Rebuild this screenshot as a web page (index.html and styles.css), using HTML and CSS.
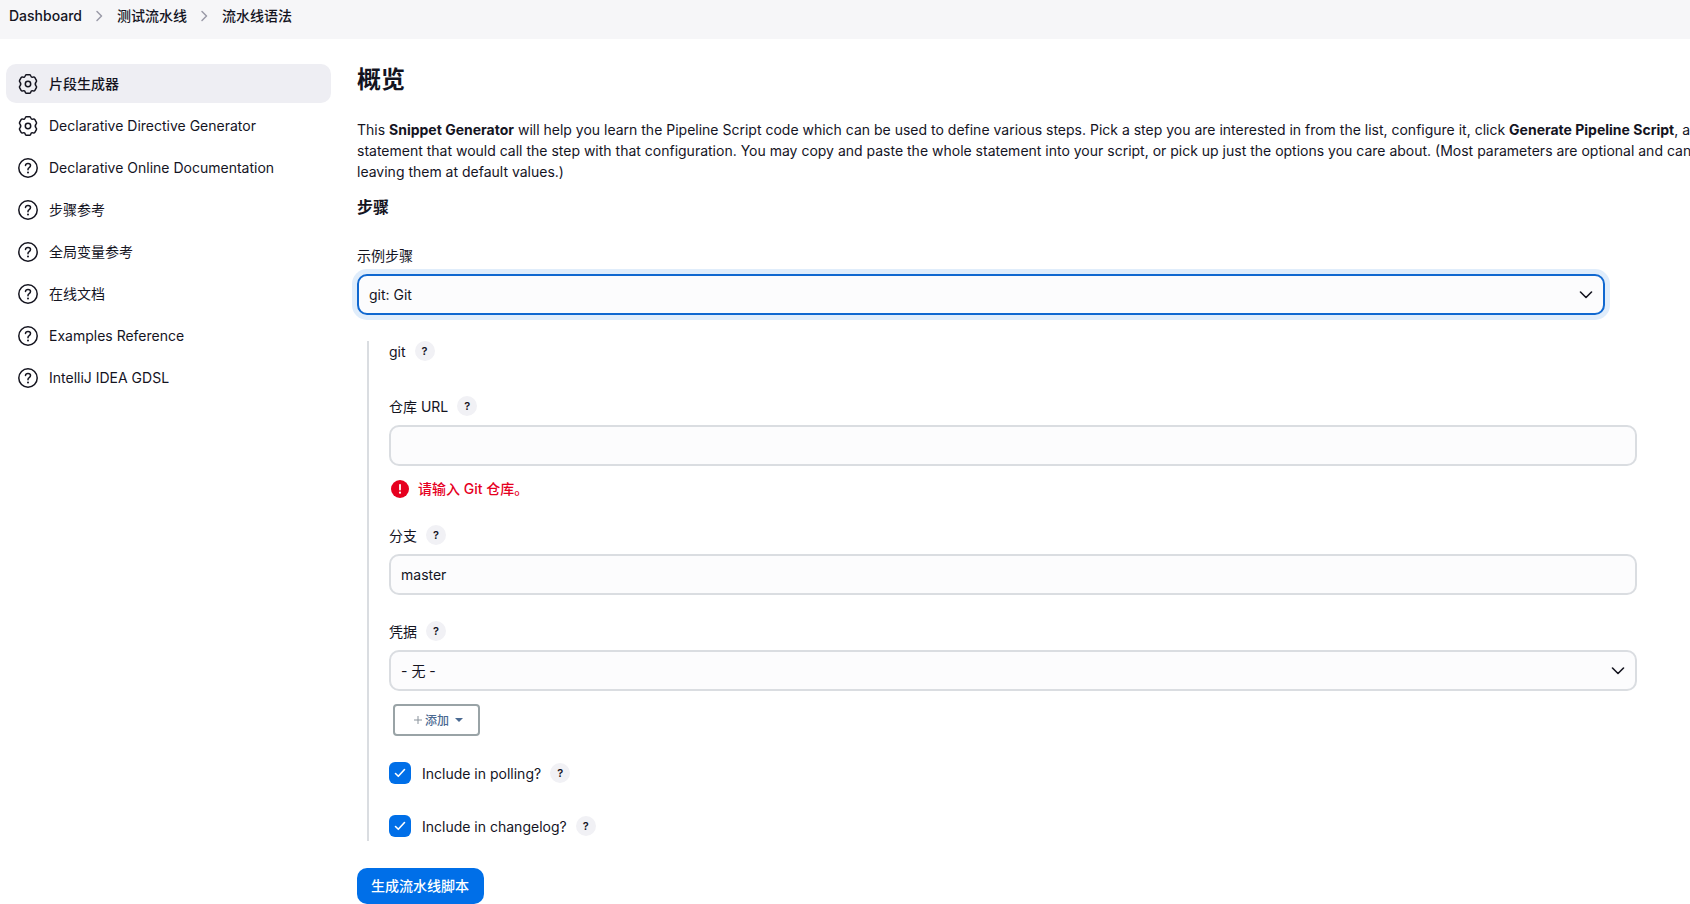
FILE: index.html
```html
<!DOCTYPE html>
<html lang="zh-CN">
<head>
<meta charset="utf-8">
<title>流水线语法</title>
<link rel="stylesheet" href="styles.css">
</head>
<body>
<svg class="defs" aria-hidden="true">
  <symbol id="gear" viewBox="0 0 20 20"><g fill="none" stroke="currentColor" stroke-width="1.500" stroke-linejoin="round"><path d="M8.300.8H11.700Q12.600.8 12.800 1.900Q13.300 3.600 15 3.100Q16.300 2.700 16.900 3.700L18.400 6.300Q18.900 7.200 18.100 8Q16.400 10 18.100 12Q18.900 12.800 18.400 13.700L16.900 16.300Q16.300 17.300 15 16.900Q13.300 16.400 12.800 18.100Q12.600 19.200 11.700 19.200H8.300Q7.400 19.200 7.200 18.100Q6.700 16.400 5 16.900Q3.700 17.300 3.100 16.300L1.600 13.700Q1.100 12.800 1.900 12Q3.600 10 1.900 8Q1.100 7.200 1.600 6.300L3.100 3.700Q3.700 2.700 5 3.100Q6.700 3.600 7.200 1.900Q7.400.8 8.300.8Z"/><circle cx="10" cy="10" r="2.700"/></g></symbol>
  <symbol id="help" viewBox="0 0 20 20"><g fill="none" stroke="currentColor" stroke-width="1.500" stroke-linecap="round" stroke-linejoin="round"><circle cx="10" cy="10" r="9.200"/><path d="M7.500 7.500C7.600 6 8.700 5.400 10 5.400c1.400 0 2.500.8 2.500 2.100 0 1-.6 1.600-1.300 2.100-.8.500-1.200 1-1.200 1.900v.3"/></g><circle cx="10" cy="14.400" r="1" fill="currentColor"/></symbol>
  <symbol id="sep" viewBox="0 0 8 12"><path d="M1.500 1.500 6 6l-4.500 4.500" fill="none" stroke="currentColor" stroke-width="1.500" stroke-linecap="round" stroke-linejoin="round"/></symbol>
</svg>
<nav class="breadcrumbs" aria-label="Breadcrumb">
  <a href="#">Dashboard</a>
  <svg class="sep"><use href="#sep"/></svg>
  <a href="#">测试流水线</a>
  <svg class="sep"><use href="#sep"/></svg>
  <a href="#">流水线语法</a>
</nav>
<div class="page">
  <nav class="tasks" aria-label="Tasks">
    <a class="task active" href="#"><svg><use href="#gear"/></svg>片段生成器</a>
    <a class="task" href="#"><svg><use href="#gear"/></svg>Declarative Directive Generator</a>
    <a class="task" href="#"><svg><use href="#help"/></svg>Declarative Online Documentation</a>
    <a class="task" href="#"><svg><use href="#help"/></svg>步骤参考</a>
    <a class="task" href="#"><svg><use href="#help"/></svg>全局变量参考</a>
    <a class="task" href="#"><svg><use href="#help"/></svg>在线文档</a>
    <a class="task" href="#"><svg><use href="#help"/></svg>Examples Reference</a>
    <a class="task" href="#"><svg><use href="#help"/></svg>IntelliJ IDEA GDSL</a>
  </nav>
  <main class="main">
    <h1>概览</h1>
    <p class="intro">This <strong>Snippet Generator</strong> will help you learn the Pipeline Script code which can be used to define various steps. Pick a step you are interested in from the list, configure it, click <strong>Generate Pipeline Script</strong>, and you will see a Pipeline Script<br>statement that would call the step with that configuration. You may copy and paste the whole statement into your script, or pick up just the options you care about. (Most parameters are optional and can be omitted in your script,<br>leaving them at default values.)</p>
    <h2>步骤</h2>
    <form>
      <div class="label-row"><label for="step">示例步骤</label></div>
      <select id="step" class="control focused"><option>git: Git</option></select>
      <section class="nested">
        <div class="label-row">git <button type="button" class="tip" aria-label="git help">?</button></div>
        <div class="field first">
          <div class="label-row"><label for="url">仓库 URL</label><button type="button" class="tip">?</button></div>
          <input id="url" class="control" type="text">
          <p class="error"><svg viewBox="0 0 18 18"><circle cx="9" cy="9" r="9" fill="currentColor"/><path d="M9 4.800v4.700" stroke="#fff" stroke-width="1.800" stroke-linecap="round"/><circle cx="9" cy="12.700" r="1.100" fill="#fff"/></svg>请输入 Git 仓库。</p>
        </div>
        <div class="field">
          <div class="label-row"><label for="branch">分支</label><button type="button" class="tip">?</button></div>
          <input id="branch" class="control" type="text" value="master">
        </div>
        <div class="field credentials">
          <div class="label-row"><label for="cred">凭据</label><button type="button" class="tip">?</button></div>
          <select id="cred" class="control"><option>- 无 -</option></select>
          <button type="button" class="add"><svg class="plus" viewBox="0 0 8 8"><path d="M4 0v8M0 4h8" stroke="currentColor" stroke-width="1"/></svg>添加<svg class="caret" viewBox="0 0 8 4"><path d="M0 0h8L4 4z" fill="currentColor"/></svg></button>
        </div>
        <div class="check-row"><input id="poll" type="checkbox" checked><label for="poll">Include in polling?</label><button type="button" class="tip">?</button></div>
        <div class="check-row"><input id="log" type="checkbox" checked><label for="log">Include in changelog?</label><button type="button" class="tip">?</button></div>
      </section>
      <button type="button" class="submit">生成流水线脚本</button>
    </form>
  </main>
</div>
</body>
</html>
```
FILE: styles.css
```css
* { box-sizing: border-box; }
body {
  margin: 0;
  overflow: hidden;
  background: #fff;
  color: #14141f;
  font: 14px/21px Inter, "Noto Sans CJK SC", sans-serif;
}
.defs { position: absolute; width: 0; height: 0; }
a { color: inherit; text-decoration: none; }
button, input, select { font: inherit; color: inherit; }

.breadcrumbs {
  display: flex;
  align-items: center;
  gap: 13px;
  height: 39px;
  padding: 0 9px 8px;
  background: #f6f6f8;
  font-weight: 500;
}
.sep { width: 9px; height: 12px; color: #9b9ba8; }

.page { display: flex; gap: 26px; padding: 25px 0 0 6px; }
.tasks { display: flex; flex-direction: column; flex: 0 0 325px; gap: 3px; }
.task {
  display: flex;
  align-items: center;
  gap: 11px;
  height: 39px;
  padding: 0 12px;
  border-radius: 10px;
}
.task svg { width: 20px; height: 20px; }
.task.active { background: #eeeef3; font-weight: 500; }

.main { flex: 1; min-width: 0; padding-top: 1px; }
h1 { margin: 0 0 24px; font-size: 24px; line-height: 30px; font-weight: 700; }
.intro { margin: 0; white-space: nowrap; }
h2 { margin: 13px 0 26px; font-size: 16px; line-height: 24px; font-weight: 600; }

.label-row {
  display: flex;
  align-items: center;
  gap: 9px;
  height: 20px;
  margin-bottom: 9px;
}
.tip {
  width: 20px;
  height: 20px;
  padding: 0;
  border: 0;
  border-radius: 50%;
  background: #f1f1f5;
  font-size: 11px;
  line-height: 20px;
  font-weight: 600;
}
.control {
  display: block;
  width: 100%;
  max-width: 1248px;
  height: 41px;
  padding: 0 10px;
  border: 2px solid #dadde1;
  border-radius: 10px;
  outline: 0;
  background-color: #fcfcfd;
}
select.control {
  appearance: none;
  background-image: url("data:image/svg+xml,%3Csvg xmlns='http://www.w3.org/2000/svg' width='14' height='8' viewBox='0 0 14 8'%3E%3Cpath d='M1.500 1 7 6.500 12.500 1' fill='none' stroke='%2314141f' stroke-width='1.600' stroke-linecap='round' stroke-linejoin='round'/%3E%3C/svg%3E");
  background-repeat: no-repeat;
  background-position: right 10px center;
}
.control.focused { border-color: #1068d0; box-shadow: 0 0 0 5px #e0edfb; }

.nested {
  margin: 26px 0 27px 10px;
  padding: 0 0 4px 20px;
  border-left: 2px solid #dadde1;
}
.field { margin-bottom: 26px; }
.field.first { margin-top: 35px; }
.error {
  display: flex;
  align-items: center;
  gap: 9px;
  margin: 12px 0 0;
  padding-left: 2px;
  color: #e6001f;
  font-weight: 500;
}
.error svg { width: 18px; height: 18px; }
.add {
  display: flex;
  align-items: center;
  justify-content: center;
  width: 87px;
  height: 32px;
  margin: 13px 0 0 4px;
  padding: 0 0 0 4px;
  border: 2px solid #99a3a6;
  border-radius: 4px;
  background: #fff;
  color: #4b6a92;
  font-size: 12px;
  font-weight: 500;
}
.plus { width: 8px; height: 8px; margin-right: 3px; color: #8a939c; }
.caret { width: 8px; height: 4px; margin-left: 6px; }
.check-row { display: flex; align-items: center; gap: 9px; height: 22px; }
.check-row + .check-row { margin-top: 31px; }
.check-row input {
  appearance: none;
  width: 22px;
  height: 22px;
  margin: 0 2px 0 0;
  border-radius: 6px;
  background: #006fe8 url("data:image/svg+xml,%3Csvg xmlns='http://www.w3.org/2000/svg' width='12' height='10' viewBox='0 0 12 10'%3E%3Cpath d='M1.500 5.500 4.300 8.300 10.500 1.500' fill='none' stroke='white' stroke-width='1.600' stroke-linecap='round' stroke-linejoin='round'/%3E%3C/svg%3E") center no-repeat;
}
.submit {
  display: block;
  height: 36px;
  padding: 0 15px 1px 14px;
  border: 0;
  border-radius: 10px;
  background: #006fe8;
  color: #fff;
  font-weight: 500;
}
```
